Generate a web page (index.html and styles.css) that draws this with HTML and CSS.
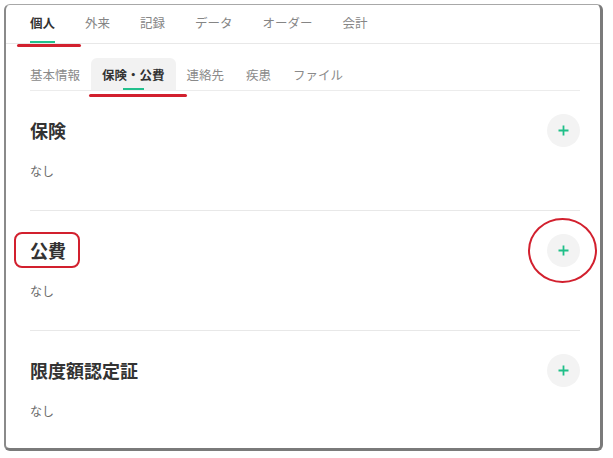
FILE: index.html
```html
<!DOCTYPE html>
<html>
<head>
  <meta charset="utf-8">
  <title>保険・公費</title>
  <link rel="stylesheet" href="styles.css">
</head>
<body>
  <div class="page">
    <div class="frame">
      <div class="maintabs">
        <div class="maintab active">個人</div>
        <div class="maintab">外来</div>
        <div class="maintab">記録</div>
        <div class="maintab">データ</div>
        <div class="maintab">オーダー</div>
        <div class="maintab">会計</div>
      </div>
      <div class="content">
        <div class="subbar">
          <div class="subtabs">
            <div class="subtab">基本情報</div>
            <div class="subtab active">保険・公費</div>
            <div class="subtab">連絡先</div>
            <div class="subtab">疾患</div>
            <div class="subtab">ファイル</div>
          </div>
        </div>

        <div class="section">
          <div class="section-head">
            <div class="section-title">保険</div>
            <button class="add-btn"><svg width="11" height="11" viewBox="0 0 11 11"><path d="M5.5 0.5v10M0.5 5.5h10" stroke="#1fbf88" stroke-width="1.8" fill="none"/></svg></button>
          </div>
          <div class="section-body">なし</div>
        </div>

        <div class="section">
          <div class="section-head">
            <div class="section-title">公費</div>
            <button class="add-btn"><svg width="11" height="11" viewBox="0 0 11 11"><path d="M5.5 0.5v10M0.5 5.5h10" stroke="#1fbf88" stroke-width="1.8" fill="none"/></svg></button>
          </div>
          <div class="section-body">なし</div>
        </div>

        <div class="section last">
          <div class="section-head">
            <div class="section-title">限度額認定証</div>
            <button class="add-btn"><svg width="11" height="11" viewBox="0 0 11 11"><path d="M5.5 0.5v10M0.5 5.5h10" stroke="#1fbf88" stroke-width="1.8" fill="none"/></svg></button>
          </div>
          <div class="section-body">なし</div>
        </div>
      </div>
    </div>

    <!-- 赤い注釈 -->
    <div class="mark line-main"></div>
    <div class="mark line-sub"></div>
    <div class="mark box-title"></div>
    <div class="mark ring-btn"></div>
  </div>
</body>
</html>
```

FILE: styles.css
```css
body {
  margin: 0;
  background: #fff;
  font-family: "Noto Sans CJK JP", "Noto Sans", sans-serif;
}
.page {
  position: relative;
  width: 613px;
  height: 458px;
}
.frame {
  position: absolute;
  left: 4px;
  top: 4px;
  width: 599px;
  height: 447px;
  box-sizing: border-box;
  border-top: 1px solid #a8a8a8;
  border-left: 2px solid #8a8a8a;
  border-right: 3px solid #7a7a7a;
  border-bottom: 3px solid #7a7a7a;
  border-radius: 6px;
  overflow: hidden;
  background: #fff;
}
.maintabs {
  display: flex;
  height: 38px;
  padding-left: 24px;
  border-bottom: 1px solid #e8e8e8;
}
.maintab {
  display: flex;
  align-items: center;
  margin-right: 30px;
  padding-bottom: 2px;
  font-size: 12.5px;
  color: #858585;
  box-sizing: border-box;
  border-bottom: 2px solid transparent;
}
.maintab.active {
  color: #333;
  font-weight: bold;
  border-bottom-color: #22c08c;
}
.content {
  padding: 0 20px 0 24px;
}
.subbar {
  margin-top: 14px;
  border-bottom: 1px solid #ececec;
}
.subtabs {
  display: flex;
  margin-left: -11px;
}
.subtab {
  position: relative;
  display: flex;
  align-items: center;
  height: 32px;
  padding: 0 11px;
  font-size: 12.5px;
  color: #8a8a8a;
  border-radius: 6px 6px 0 0;
}
.subtab.active {
  background: #f2f2f2;
  color: #333;
  font-weight: bold;
}
.subtab.active::after {
  content: "";
  position: absolute;
  left: 50%;
  bottom: 0;
  width: 21px;
  height: 2px;
  margin-left: -10px;
  background: #22c08c;
}
.section {
  padding: 23px 0 30px;
  border-bottom: 1px solid #e8e8e8;
}
.section.last {
  border-bottom: none;
}
.section-head {
  display: flex;
  justify-content: space-between;
  align-items: center;
  height: 32px;
}
.section-title {
  font-size: 18px;
  font-weight: bold;
  color: #333;
}
.add-btn {
  width: 33px;
  height: 33px;
  border: none;
  border-radius: 50%;
  background: #f3f3f3;
  display: flex;
  justify-content: center;
  align-items: center;
  padding: 0;
}
.section-body {
  margin-top: 16px;
  font-size: 12px;
  line-height: 18px;
  color: #6a6a6a;
}
.mark {
  position: absolute;
  box-sizing: border-box;
}
.line-main {
  left: 17px;
  top: 44px;
  width: 64px;
  height: 3px;
  background: #d2202e;
  border-radius: 2px;
}
.line-sub {
  left: 89px;
  top: 94px;
  width: 98px;
  height: 3px;
  background: #d2202e;
  border-radius: 2px;
}
.box-title {
  left: 14px;
  top: 232px;
  width: 66px;
  height: 36px;
  border: 2px solid #d2202e;
  border-radius: 8px;
}
.ring-btn {
  left: 528px;
  top: 218px;
  width: 69px;
  height: 65px;
  border: 2px solid #d2202e;
  border-radius: 50%;
}
```
